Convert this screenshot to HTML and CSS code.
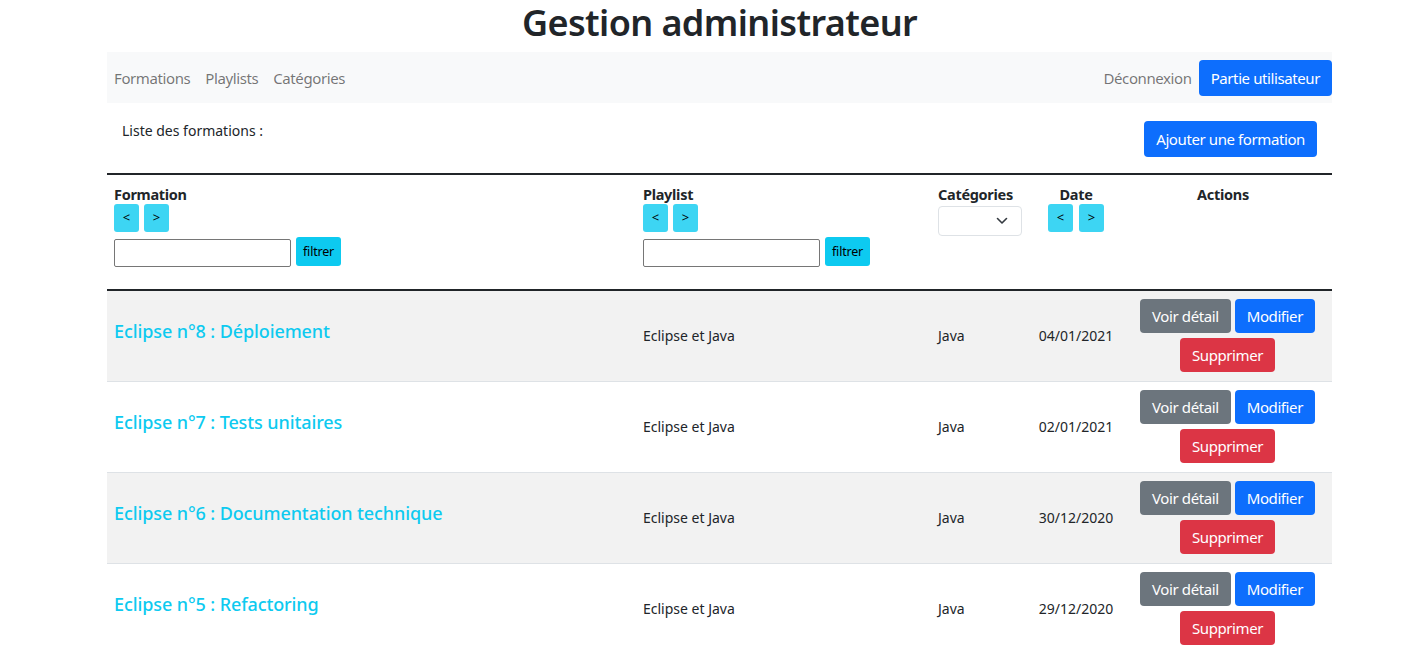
FILE: index.html
```html
<!DOCTYPE html>
<html lang="fr">
<head>
<meta charset="utf-8">
<title>Gestion administrateur</title>
<link rel="stylesheet" href="styles.css">
</head>
<body>
<div class="page">
  <h1 class="title">Gestion administrateur</h1>
  <nav class="navbar">
    <div class="nav-left">
      <a class="nav-link" href="#">Formations</a>
      <a class="nav-link" href="#">Playlists</a>
      <a class="nav-link" href="#">Catégories</a>
    </div>
    <div class="nav-right">
      <a class="nav-link" href="#">Déconnexion</a>
      <a class="btn btn-primary" href="#">Partie utilisateur</a>
    </div>
  </nav>
  <div class="list-head">
    <p class="list-title">Liste des formations :</p>
    <a class="btn btn-primary add-btn" href="#">Ajouter une formation</a>
  </div>
  <table class="table">
    <colgroup>
      <col class="c1"><col class="c2"><col class="c3"><col class="c4"><col class="c5">
    </colgroup>
    <thead>
      <tr>
        <th>
          <div class="th-label">Formation</div>
          <div class="sort"><a class="btn-arrow">&lt;</a><a class="btn-arrow">&gt;</a></div>
          <div class="filter"><input type="text" class="filter-input"><button class="btn-filter">filtrer</button></div>
        </th>
        <th>
          <div class="th-label">Playlist</div>
          <div class="sort"><a class="btn-arrow">&lt;</a><a class="btn-arrow">&gt;</a></div>
          <div class="filter"><input type="text" class="filter-input"><button class="btn-filter">filtrer</button></div>
        </th>
        <th>
          <div class="th-label">Catégories</div>
          <div class="select"><svg width="12" height="8" viewBox="0 0 12 8"><path d="M1.5 1.5 6 6l4.5-4.5" fill="none" stroke="#343a40" stroke-width="1.6" stroke-linecap="round" stroke-linejoin="round"/></svg></div>
        </th>
        <th class="center">
          <div class="th-label">Date</div>
          <div class="sort center-sort"><a class="btn-arrow">&lt;</a><a class="btn-arrow">&gt;</a></div>
        </th>
        <th class="center th-actions">
          <div class="th-label">Actions</div>
        </th>
      </tr>
    </thead>
    <tbody>
      <tr class="striped">
        <td><a class="f-title" href="#">Eclipse n°8 : Déploiement</a></td>
        <td class="txt">Eclipse et Java</td>
        <td class="txt">Java</td>
        <td class="txt center">04/01/2021</td>
        <td class="actions"><a class="btn btn-secondary">Voir détail</a><a class="btn btn-primary">Modifier</a><a class="btn btn-danger">Supprimer</a></td>
      </tr>
      <tr>
        <td><a class="f-title" href="#">Eclipse n°7 : Tests unitaires</a></td>
        <td class="txt">Eclipse et Java</td>
        <td class="txt">Java</td>
        <td class="txt center">02/01/2021</td>
        <td class="actions"><a class="btn btn-secondary">Voir détail</a><a class="btn btn-primary">Modifier</a><a class="btn btn-danger">Supprimer</a></td>
      </tr>
      <tr class="striped">
        <td><a class="f-title" href="#">Eclipse n°6 : Documentation technique</a></td>
        <td class="txt">Eclipse et Java</td>
        <td class="txt">Java</td>
        <td class="txt center">30/12/2020</td>
        <td class="actions"><a class="btn btn-secondary">Voir détail</a><a class="btn btn-primary">Modifier</a><a class="btn btn-danger">Supprimer</a></td>
      </tr>
      <tr>
        <td><a class="f-title" href="#">Eclipse n°5 : Refactoring</a></td>
        <td class="txt">Eclipse et Java</td>
        <td class="txt">Java</td>
        <td class="txt center">29/12/2020</td>
        <td class="actions"><a class="btn btn-secondary">Voir détail</a><a class="btn btn-primary">Modifier</a><a class="btn btn-danger">Supprimer</a></td>
      </tr>
    </tbody>
  </table>
</div>
</body>
</html>
```

FILE: styles.css
```css
* { box-sizing: border-box; }
html, body { margin: 0; padding: 0; background: #fff; }
body {
  font-family: "Noto Sans", "Open Sans", sans-serif;
  font-size: 15px;
  color: #212529;
  line-height: 1.5;
}
.page {
  width: 1225px;
  margin-left: 107px;
}
.title {
  margin: 0;
  padding-top: 1px;
  height: 52px;
  text-align: center;
  font-size: 36px;
  letter-spacing: -0.6px;
  font-weight: 600;
  line-height: 44px;
  color: #212529;
}
.navbar {
  display: flex;
  justify-content: space-between;
  align-items: center;
  height: 51px;
  background: #f8f9fa;
  padding: 0 0 0 7px;
}
.nav-left, .nav-right { display: flex; align-items: center; }
.nav-link {
  color: rgba(0,0,0,.55);
  text-decoration: none;
  margin-right: 15px;
  font-size: 15px;
  letter-spacing: -0.4px;
  padding-top: 1px;
}
.nav-right .nav-link { margin-right: 7px; }
.btn {
  display: inline-block;
  border-radius: 4px;
  color: #fff;
  text-decoration: none;
  font-size: 15px;
  letter-spacing: -0.4px;
  line-height: 22px;
  padding: 7px 12px;
  text-align: center;
  white-space: nowrap;
}
.btn-primary { background: #0d6efd; }
.btn-secondary { background: #6c757d; }
.btn-danger { background: #dc3545; }
.list-head {
  display: flex;
  justify-content: space-between;
  align-items: flex-start;
  height: 70px;
  padding: 17px 15px 0 15px;
}
.list-title { margin: 0; font-size: 14px; line-height: 22px; }
.add-btn { margin-top: 1px; }
.table {
  width: 1225px;
  border-collapse: collapse;
  table-layout: fixed;
  border-top: 2px solid #212529;
}
.c1 { width: 529px; }
.c2 { width: 295px; }
.c3 { width: 98px; }
.c4 { width: 94px; }
.c5 { width: 209px; }
thead th {
  text-align: left;
  vertical-align: top;
  padding: 8px 7px 22px 7px;
  border-bottom: 2px solid #212529;
  font-weight: 700;
  height: 114px;
}
th.center { text-align: center; }
th.th-actions { padding-right: 16px; }
.th-label { font-size: 14.5px; letter-spacing: -0.3px; line-height: 22px; height: 21px; }
.sort { display: flex; gap: 5px; }
.center-sort { justify-content: center; gap: 6px; }
.btn-arrow {
  display: inline-flex;
  align-items: center;
  justify-content: center;
  width: 25px;
  height: 28px;
  background: #3dd5f3;
  border-radius: 3px;
  color: #000;
  font-size: 13px;
  font-weight: 400;
}
.filter { display: flex; align-items: flex-end; gap: 5px; margin-top: 5px; }
.filter-input {
  width: 177px;
  height: 28px;
  border: 1px solid #767676;
  border-radius: 2px;
  padding: 0;
  margin: 0;
}
.btn-filter {
  height: 29px;
  padding: 0 7px;
  border: none;
  background: #0dcaf0;
  border-radius: 3px;
  font-family: inherit;
  font-size: 12.5px;
  letter-spacing: -0.2px;
  color: #000;
  margin-bottom: 1px;
}
.select {
  width: 84px;
  height: 30px;
  margin-top: 2px;
  border: 1px solid #dee2e6;
  border-radius: 4px;
  background: #fff;
  display: flex;
  align-items: center;
  justify-content: flex-end;
  padding-right: 13px;
}
tbody td {
  height: 91px;
  padding: 7px;
  vertical-align: middle;
  border-bottom: 1px solid #dee2e6;
}
tbody tr.striped td { background: #f2f2f2; }
tbody tr:last-child td { border-bottom: none; }
.f-title {
  color: #0dcaf0;
  text-decoration: none;
  font-size: 18px;
  letter-spacing: -0.1px;
  font-weight: 500;
  position: relative;
  top: -4px;
}
.txt { font-size: 14px; }
.center { text-align: center; }
.actions {
  text-align: center;
  padding: 6px 0;
}
.actions .btn { margin: 0 2px 5px 2px; padding: 6px 12px; }
.actions .btn-danger { margin-bottom: 0; }
```
